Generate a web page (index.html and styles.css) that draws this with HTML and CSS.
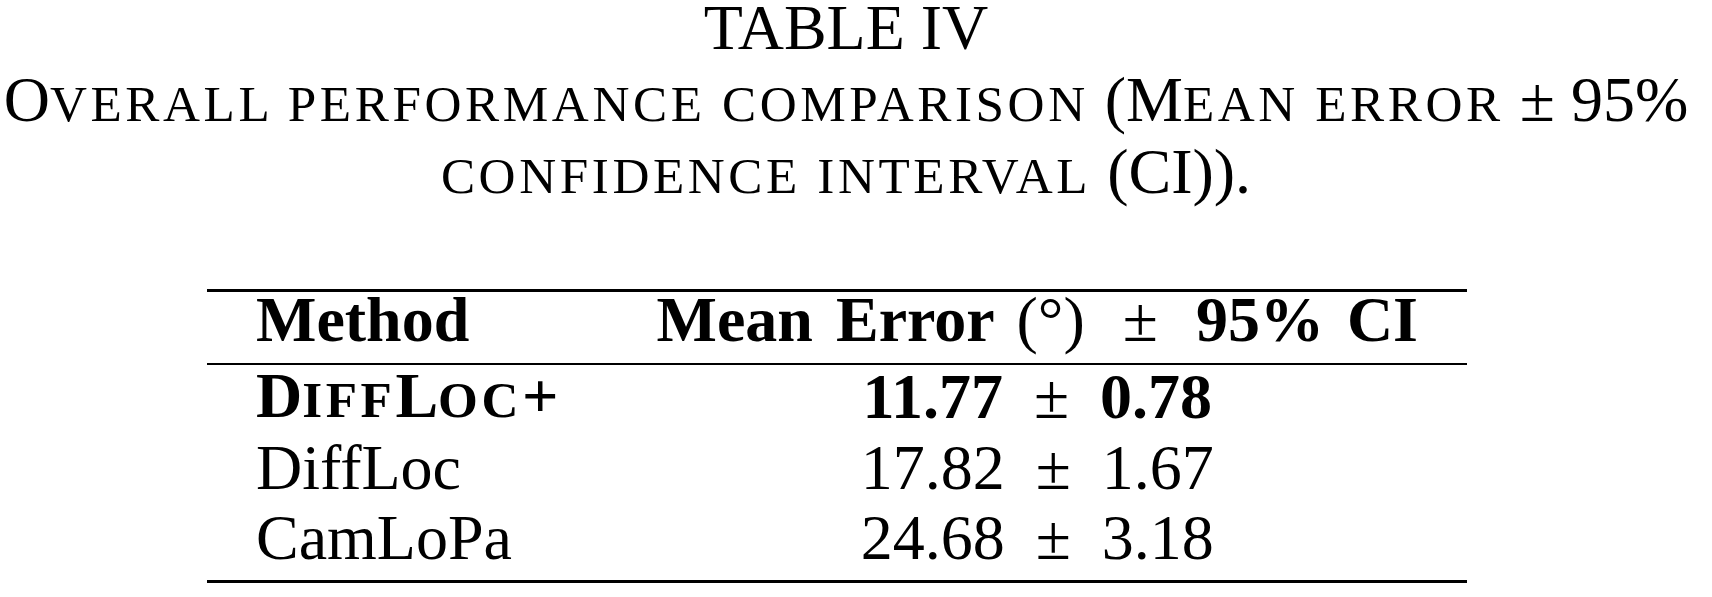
FILE: index.html
```html
<!DOCTYPE html>
<html lang="en">
<head>
    <meta charset="UTF-8">
    <meta name="viewport" content="width=device-width, initial-scale=1.0">
    <link rel="stylesheet" href="styles.css">
</head>
<body>
    <!-- Caption -->
    <div class="caption">
        <div class="caption-line">TABLE IV</div>
        <div class="caption-line">O<span class="sc">verall performance comparison</span> (M<span class="sc">ean error</span> &plusmn; 95%</div>
        <div class="caption-line"><span class="sc">confidence interval</span> (CI)).</div>
    </div>

    <!-- Results table -->
    <div class="table-wrap">
        <table class="results">
            <thead>
                <tr>
                    <th class="col-method">Method</th>
                    <th class="col-error">Mean Error <span class="math">(&deg;)</span> <span class="math op">&plusmn;</span> 95% CI</th>
                </tr>
            </thead>
            <tbody>
                <tr class="best">
                    <td class="col-method">D<span class="sc">iff</span>L<span class="sc">oc</span>+</td>
                    <td class="col-error">11.77 <span class="math op">&plusmn;</span> 0.78</td>
                </tr>
                <tr>
                    <td class="col-method">DiffLoc</td>
                    <td class="col-error">17.82 <span class="op">&plusmn;</span> 1.67</td>
                </tr>
                <tr>
                    <td class="col-method">CamLoPa</td>
                    <td class="col-error">24.68 <span class="op">&plusmn;</span> 3.18</td>
                </tr>
            </tbody>
        </table>
    </div>
</body>
</html>
```
FILE: styles.css
```css
body {
    font-family: "Liberation Serif", "Times New Roman", serif;
    margin: 0;
    padding: 0;
    background-color: #ffffff;
    color: #000000;
}

/* Small caps, drawn as scaled and spaced capitals */
.sc {
    text-transform: uppercase;
    font-size: 0.8em;
    letter-spacing: 0.07em;
    line-height: 1;
}

/* Binary operator spacing, like TeX math */
.op {
    margin: 0 15px;
}

/* Caption */
.caption {
    padding-right: 20px;
    text-align: center;
    font-size: 64px;
    line-height: 56px;
}

.caption-line {
    white-space: nowrap;
}

.caption-line + .caption-line {
    margin-top: 16px;
}

.caption-line + .caption-line + .caption-line {
    margin-top: 15px;
}

/* Table */
.table-wrap {
    display: flex;
    justify-content: center;
    padding-right: 38px;
    margin-top: 88px;
}

.results {
    border-collapse: collapse;
    font-size: 64px;
    line-height: 56px;
    white-space: nowrap;
}

.results thead tr {
    border-top: 3px solid #000;
    border-bottom: 2px solid #000;
}

.results th {
    font-weight: bold;
    padding: 0 49px 15px;
}

.results th.col-error {
    word-spacing: 7px;
}

.results td {
    padding: 3px 49px 11px;
}

.results tbody tr:last-child {
    border-bottom: 3px solid #000;
}

.results tbody tr:last-child td {
    padding-bottom: 14px;
}

.col-method {
    text-align: left;
}

.col-error {
    text-align: center;
}

.math {
    font-weight: normal;
}

.best td {
    font-weight: bold;
}
```
